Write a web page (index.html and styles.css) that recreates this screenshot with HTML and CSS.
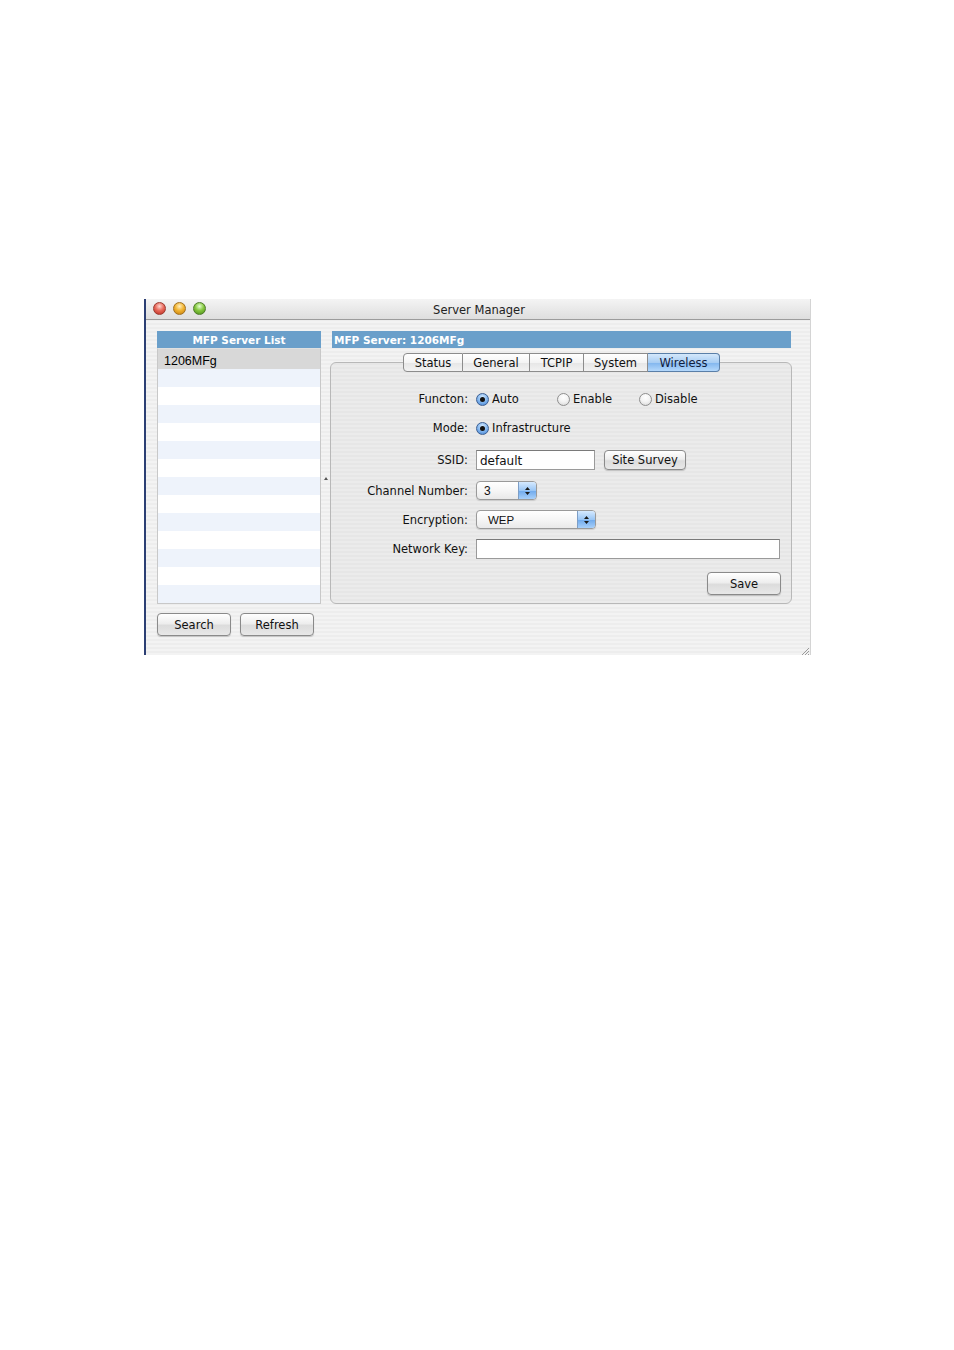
FILE: index.html
```html
<!DOCTYPE html>
<html>
<head>
<meta charset="utf-8">
<title>Server Manager</title>
<link rel="stylesheet" href="styles.css">
</head>
<body>
<div class="page">
  <div class="window">
    <div class="titlebar">
      <div class="lights">
        <span class="light red"></span>
        <span class="light yellow"></span>
        <span class="light green"></span>
      </div>
      <div class="title">Server Manager</div>
    </div>
    <div class="content">
      <div class="left">
        <div class="header center">MFP Server List</div>
        <div class="list">
          <div class="row selected">1206MFg</div>
          <div class="row alt"></div>
          <div class="row"></div>
          <div class="row alt"></div>
          <div class="row"></div>
          <div class="row alt"></div>
          <div class="row"></div>
          <div class="row alt"></div>
          <div class="row"></div>
          <div class="row alt"></div>
          <div class="row"></div>
          <div class="row alt"></div>
          <div class="row"></div>
          <div class="row alt"></div>
        </div>
        <div class="buttons">
          <button class="btn">Search</button>
          <button class="btn">Refresh</button>
        </div>
      </div>
      <div class="splitter"><span class="caret"></span></div>
      <div class="right">
        <div class="header">MFP Server: 1206MFg</div>
        <div class="tabs">
          <span class="tab t-status">Status</span>
          <span class="tab t-general">General</span>
          <span class="tab t-tcpip">TCPIP</span>
          <span class="tab t-system">System</span>
          <span class="tab t-wireless active">Wireless</span>
        </div>
        <div class="tabbox">
          <div class="frow r1">
            <div class="label">Functon:</div>
            <div class="ctrl">
              <span class="radio-item w-auto"><span class="radio on"></span>Auto</span>
              <span class="radio-item w-enable"><span class="radio"></span>Enable</span>
              <span class="radio-item"><span class="radio"></span>Disable</span>
            </div>
          </div>
          <div class="frow r2">
            <div class="label">Mode:</div>
            <div class="ctrl">
              <span class="radio-item"><span class="radio on"></span>Infrastructure</span>
            </div>
          </div>
          <div class="frow r3">
            <div class="label">SSID:</div>
            <div class="ctrl">
              <span class="field ssid">default</span>
              <button class="btn small survey">Site Survey</button>
            </div>
          </div>
          <div class="frow r4">
            <div class="label">Channel Number:</div>
            <div class="ctrl">
              <span class="popup chan"><span class="pv">3</span><span class="arrows"><svg width="7" height="10" viewBox="0 0 7 10"><path d="M3.5 1 L6 4 L1 4 Z M3.5 9 L6 6 L1 6 Z" fill="#1a1a1a"/></svg></span></span>
            </div>
          </div>
          <div class="frow r5">
            <div class="label">Encryption:</div>
            <div class="ctrl">
              <span class="popup enc"><span class="pv">WEP</span><span class="arrows"><svg width="7" height="10" viewBox="0 0 7 10"><path d="M3.5 1 L6 4 L1 4 Z M3.5 9 L6 6 L1 6 Z" fill="#1a1a1a"/></svg></span></span>
            </div>
          </div>
          <div class="frow r6">
            <div class="label">Network Key:</div>
            <div class="ctrl">
              <span class="field key"></span>
            </div>
          </div>
          <div class="save-row">
            <button class="btn save">Save</button>
          </div>
        </div>
      </div>
    </div>
    <div class="grip">
      <svg width="10" height="10" viewBox="0 0 10 10"><path d="M9 2 L2 9 M9 5 L5 9 M9 8 L8 9" stroke="#9a9a9a" stroke-width="1"/></svg>
    </div>
  </div>
</div>
</body>
</html>
```
FILE: styles.css
```css
html, body {
  margin: 0;
  padding: 0;
  background: #ffffff;
}
.page {
  padding: 299px 0 0 144px;
}
.window {
  position: relative;
  width: 667px;
  height: 356px;
  border-left: 2px solid #2c3f74;
  border-right: 1px solid #d4d4d4;
  background: repeating-linear-gradient(to bottom, #ededed 0px, #ededed 2px, #f3f3f3 2px, #f3f3f3 4px);
  font-family: "DejaVu Sans", sans-serif;
  font-size: 11.5px;
  color: #111;
  box-sizing: border-box;
}
.titlebar {
  position: relative;
  height: 20px;
  border-bottom: 1px solid #9c9c9c;
  background: linear-gradient(to bottom, #f4f4f4, #dedede);
  display: flex;
  align-items: center;
  justify-content: center;
}
.lights {
  position: absolute;
  left: 7px;
  top: 3px;
  display: flex;
  gap: 7px;
}
.light {
  width: 13px;
  height: 13px;
  border-radius: 50%;
  box-sizing: border-box;
}
.red {
  background: radial-gradient(circle at 50% 30%, #ffd6d0 0%, #e86a5c 45%, #b8281c 100%);
  border: 1px solid #9a3a30;
}
.yellow {
  background: radial-gradient(circle at 50% 30%, #fff0c0 0%, #f2b533 45%, #c27a0a 100%);
  border: 1px solid #a07020;
}
.green {
  background: radial-gradient(circle at 50% 30%, #e4ffd0 0%, #86c840 45%, #4a8a18 100%);
  border: 1px solid #4e7a2a;
}
.title {
  font-size: 11.5px;
  color: #222;
  padding: 2px 0 0 2px;
}
.content {
  display: flex;
  padding: 11px 0 0 11px;
}
.left {
  width: 164px;
  display: flex;
  flex-direction: column;
}
.header {
  height: 17px;
  background: #6a9fca;
  color: #fff;
  font-weight: bold;
  font-size: 10.5px;
  line-height: 18px;
  padding-left: 2px;
  white-space: nowrap;
  overflow: hidden;
}
.header.center {
  text-align: center;
  padding-left: 0;
}
.list {
  border: 1px solid #c8c8c8;
  border-top: 1px solid #e0e0e0;
  height: 256px;
  background: #fff;
  overflow: hidden;
  box-sizing: border-box;
}
.row {
  height: 18px;
  background: #ffffff;
}
.row.alt {
  background: #eef3fb;
}
.row.selected {
  height: 20px;
  background: #d8d8d8;
  font-family: "Liberation Sans", Arial, sans-serif;
  font-size: 12.5px;
  line-height: 24px;
  padding-left: 6px;
  color: #000;
}
.buttons {
  display: flex;
  gap: 9px;
  margin-top: 9px;
}
.btn {
  font-family: "DejaVu Sans", sans-serif;
  font-size: 11.5px;
  color: #111;
  height: 23px;
  width: 74px;
  border: 1px solid #8a8a8a;
  border-radius: 4px;
  background: linear-gradient(to bottom, #ffffff 0%, #eeeeee 45%, #dcdcdc 55%, #e8e8e8 100%);
  box-shadow: 0 1px 1px rgba(0,0,0,0.18);
  padding: 0;
  cursor: default;
}
.btn.small {
  height: 20px;
  width: 82px;
  border-radius: 4px;
}
.splitter {
  width: 9px;
  display: flex;
  align-items: center;
  justify-content: center;
}
.caret {
  width: 0;
  height: 0;
  border-left: 2px solid transparent;
  border-right: 2px solid transparent;
  border-bottom: 3px solid #555;
  margin-top: -10px;
}
.right {
  width: 462px;
  display: flex;
  flex-direction: column;
}
.right .header {
  margin-left: 2px;
  width: 457px;
}
.tabs {
  position: relative;
  z-index: 1;
  display: flex;
  margin: 5px 0 -10px 73px;
  height: 19px;
}
.tab {
  height: 17px;
  border: 1px solid #8c8c8c;
  border-left: none;
  background: linear-gradient(to bottom, #ffffff 0%, #f4f4f4 50%, #e6e6e6 51%, #f2f2f2 100%);
  line-height: 18px;
  text-align: center;
  font-size: 11.5px;
  color: #111;
}
.t-status { width: 58px; border-left: 1px solid #8c8c8c; border-radius: 4px 0 0 4px; }
.t-general { width: 66px; }
.t-tcpip { width: 53px; }
.t-system { width: 63px; }
.t-wireless { width: 71px; border-radius: 0 4px 4px 0; }
.tab.active {
  background: linear-gradient(to bottom, #d4e8fb 0%, #a8cdf3 50%, #80b5ee 51%, #b4d8fb 100%);
  border-color: #5a7fa8;
  color: #102040;
}
.tabbox {
  width: 462px;
  height: 242px;
  box-sizing: border-box;
  border: 1px solid #b8b8b8;
  border-radius: 6px;
  background: repeating-linear-gradient(to bottom, #e6e6e6 0px, #e6e6e6 2px, #ebebeb 2px, #ebebeb 4px);
  padding: 26px 10px 0 0;
  display: flex;
  flex-direction: column;
}
.frow {
  display: flex;
  align-items: center;
  height: 20px;
  gap: 8px;
}
.r2 { margin-top: 9px; }
.r3 { margin-top: 12px; }
.r4 { margin-top: 11px; height: 19px; }
.r5 { margin-top: 10px; height: 19px; }
.r6 { margin-top: 10px; }
.label {
  width: 137px;
  text-align: right;
  white-space: nowrap;
}
.ctrl {
  display: flex;
  align-items: center;
}
.radio-item {
  display: flex;
  align-items: center;
  gap: 3px;
}
.w-auto { width: 81px; }
.w-enable { width: 82px; }
.radio {
  width: 13px;
  height: 13px;
  border-radius: 50%;
  box-sizing: border-box;
  border: 1px solid #8e8e8e;
  background: radial-gradient(circle at 50% 30%, #ffffff 0%, #f2f2f2 50%, #d2d2d2 100%);
  display: flex;
  align-items: center;
  justify-content: center;
}
.radio.on {
  border-color: #3d5f92;
  background: radial-gradient(circle at 50% 30%, #d8ecff 0%, #86b8ef 50%, #3f7fd0 100%);
}
.radio.on::after {
  content: "";
  width: 5px;
  height: 5px;
  border-radius: 50%;
  background: #111;
}
.field {
  display: block;
  height: 20px;
  box-sizing: border-box;
  border: 1px solid #9a9a9a;
  border-top-color: #7a7a7a;
  background: #fff;
  font-size: 12px;
  line-height: 20px;
  padding-left: 3px;
}
.ssid { width: 119px; margin-right: 9px; }
.key { width: 304px; }
.popup {
  display: flex;
  height: 19px;
  box-sizing: border-box;
  border: 1px solid #9a9a9a;
  border-radius: 4px;
  background: linear-gradient(to bottom, #ffffff 0%, #f6f6f6 50%, #e9e9e9 100%);
  overflow: hidden;
  box-shadow: 0 1px 1px rgba(0,0,0,0.12);
}
.pv {
  flex: 1;
  line-height: 19px;
  font-family: "Liberation Sans", Arial, sans-serif;
  font-size: 12px;
}
.chan { width: 61px; }
.chan .pv { padding-left: 7px; }
.enc { width: 120px; }
.enc .pv { padding-left: 11px; font-size: 11.5px; }
.arrows {
  width: 17px;
  background: linear-gradient(to bottom, #d6eaff 0%, #9ac6f5 50%, #6ea9ec 51%, #a8d0fa 100%);
  border-left: 1px solid #7d9ec6;
  display: flex;
  align-items: center;
  justify-content: center;
}
.save-row {
  display: flex;
  justify-content: flex-end;
  margin-top: 13px;
}
.btn.save {
  width: 74px;
}
.grip {
  position: absolute;
  right: 0;
  bottom: 0;
  width: 10px;
  height: 10px;
}
```
